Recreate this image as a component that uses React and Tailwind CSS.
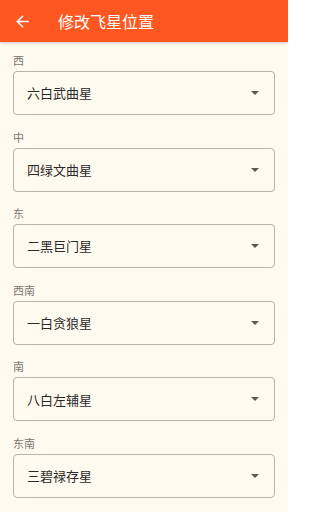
import React from "react";

const fields = [
  { label: "西", value: "六白武曲星" },
  { label: "中", value: "四绿文曲星" },
  { label: "东", value: "二黑巨门星" },
  { label: "西南", value: "一白贪狼星" },
  { label: "南", value: "八白左辅星" },
  { label: "东南", value: "三碧禄存星" },
];

const font = { fontFamily: '"Noto Sans CJK SC", "Noto Sans", sans-serif' };

const App = () => {
  return (
    <div className="w-[288px] h-[512px] overflow-hidden bg-[#fffaf0] flex flex-col" style={font}>
      {/* 顶栏 */}
      <div className="h-[42px] shrink-0 bg-[#ff5722] flex items-center shadow-[0_1px_3px_rgba(0,0,0,0.2)] z-10">
        <svg className="ml-[13px] w-[19px] h-[19px]" viewBox="0 0 24 24" fill="white">
          <path d="M20 11H7.83l5.59-5.59L12 4l-8 8 8 8 1.41-1.41L7.83 13H20v-2z" />
        </svg>
        <span className="ml-[26px] text-[16px] font-normal text-white leading-none">修改飞星位置</span>
      </div>

      {/* 表单 */}
      <div className="flex flex-col gap-[14.6px] pt-[11px] px-[13px]">
        {fields.map((f) => (
          <div key={f.label} className="flex flex-col">
            <span className="text-[11px] leading-[14px] text-[#7a7670]">{f.label}</span>
            <div className="mt-[4px] h-[44px] rounded-[4px] border border-[#b8b3a6] flex items-center justify-between pl-[13px] pr-[15px]">
              <span className="text-[13px] text-[#2b2a28]">{f.value}</span>
              <svg className="w-[8px] h-[4px]" viewBox="0 0 10 5" fill="#5a5854">
                <path d="M0 0l5 5 5-5z" />
              </svg>
            </div>
          </div>
        ))}
      </div>
    </div>
  );
};

export default App;
